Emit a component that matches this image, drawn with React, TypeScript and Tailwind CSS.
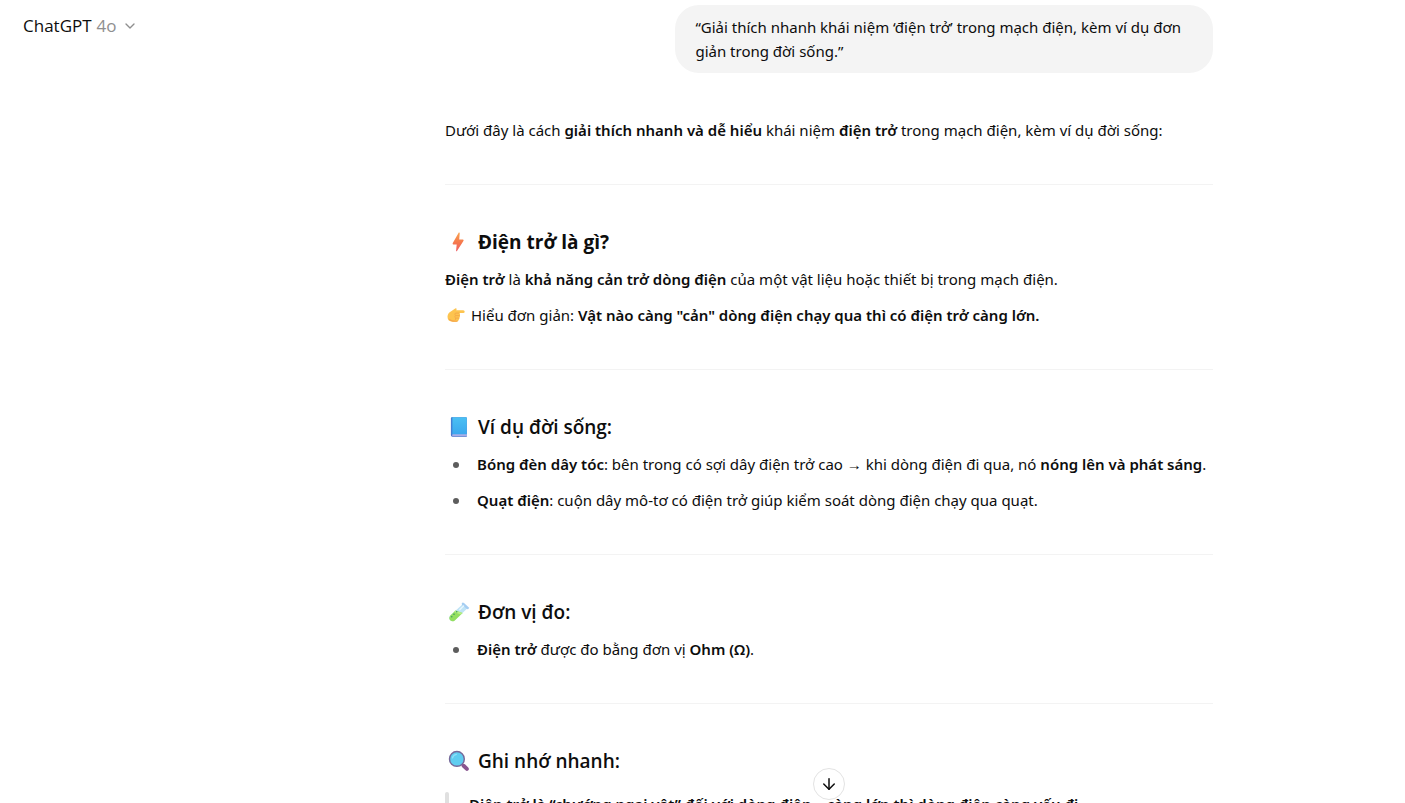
import React from 'react';
import { ArrowDown, ChevronDown } from 'lucide-react';

interface IconProps {
  className?: string;
}

// --- Icons ---

const BoltIcon: React.FC<IconProps> = ({ className }) => (
  <svg viewBox="0 0 22 22" className={className} aria-hidden="true">
    <defs>
      <linearGradient id="bolt" x1="0" y1="0" x2="0" y2="1">
        <stop offset="0" stopColor="#f9a24e" />
        <stop offset="0.55" stopColor="#f5774d" />
        <stop offset="1" stopColor="#ee5f68" />
      </linearGradient>
    </defs>
    <path
      d="M10.8 1.6 Q11.8 1.2 11.7 2.4 L11.2 8.4 H14.9 Q16.2 8.6 15.4 9.9 L9 19.9 Q7.9 21 8.1 19.5 L8.7 13.4 H5.2 Q4.2 13.1 4.8 12Z"
      fill="url(#bolt)"
    />
  </svg>
);

const PointIcon: React.FC<IconProps> = ({ className }) => (
  <svg viewBox="0 0 18 18" className={className} aria-hidden="true">
    <path
      d="M4.2 5.2 L8.2 2.5 Q9.7 1.9 9.6 3.4 L9.2 4.3 H16.3 Q17.7 4.5 17.7 5.7 Q17.6 7 16.3 7.1 H12.4 Q13.4 8 12.9 9.4 Q13.3 10.7 12.4 11.8 Q12.5 13 11.6 13.9 Q11.3 15.6 9.5 15.7 H5.6 Q0.6 15.5 0.5 10.7 Q0.6 7 4.2 5.2Z"
      fill="#fdc44f"
    />
    <path
      d="M12.4 7.1 H8.6 Q7.4 7.7 8.1 9.3 M12.9 9.6 H8.5 Q7.5 10.6 8.3 11.9 M12.3 12.1 H8.7 Q7.9 13 8.5 14"
      fill="none"
      stroke="#f0a045"
      strokeWidth="0.7"
    />
    <path d="M1.4 12.6 Q2.6 15.6 6 15.7 H9.5 Q10.8 15.6 11.4 14.5 Q7 15.6 1.4 12.6Z" fill="#f5a54c" />
  </svg>
);

const BookIcon: React.FC<IconProps> = ({ className }) => (
  <svg viewBox="0 0 22 22" className={className} aria-hidden="true">
    <defs>
      <linearGradient id="book" x1="0" y1="0" x2="0" y2="1">
        <stop offset="0" stopColor="#4bc0f3" />
        <stop offset="1" stopColor="#3ba8ee" />
      </linearGradient>
    </defs>
    <path d="M4 1.2 H18 Q18.8 1.2 18.8 2 V20.8 H4.4 Q2.9 20.6 2.9 19 V2.4 Q2.9 1.2 4 1.2Z" fill="#4a72cc" />
    <path d="M4.2 18.3 H18.8 V19.7 H4.2Z" fill="#d3c8f2" />
    <path d="M4.1 1.2 H18 Q18.8 1.2 18.8 2 V18.2 H4.1Z" fill="url(#book)" />
    <path d="M4 1.2 V18.4" stroke="#3d8fdd" strokeWidth="0.9" />
  </svg>
);

const TestTubeIcon: React.FC<IconProps> = ({ className }) => (
  <svg viewBox="0 0 22 22" className={className} aria-hidden="true">
    <path d="M14.6 3.2 L19.2 7.6 L6.9 19.3 Q4.6 21.3 2.2 19.3 Q0.2 17 2.2 14.6Z" fill="#bfe3f5" />
    <path d="M7.5 9.6 L14.6 11.9 L6.8 19.4 Q4.5 21.2 2.2 19.3 Q0.3 17.1 2.2 14.7Z" fill="#94df60" />
    <path d="M7.5 9.6 L14.6 11.9 L12.6 13.4 L6.2 11Z" fill="#b8ef85" />
    <path d="M13.7 2.4 Q14.7 0.8 16 2 L20.6 6.3 Q21.5 7.7 20 8.2 L18.8 8 L14 3.8Z" fill="#a5cdf2" />
    <path d="M15.6 5 L11.8 8.7" stroke="#e8f7ff" strokeWidth="1.3" strokeLinecap="round" />
    <circle cx="8.7" cy="10.7" r="0.8" fill="#3f9a68" />
    <circle cx="6" cy="13.2" r="0.8" fill="#3f9a68" />
    <circle cx="3.7" cy="15.8" r="0.8" fill="#3f9a68" />
  </svg>
);

const MagnifierIcon: React.FC<IconProps> = ({ className }) => (
  <svg viewBox="0 0 22 22" className={className} aria-hidden="true">
    <path d="M13.3 13.6 L16 16.2" stroke="#8d8294" strokeWidth="2.2" />
    <path d="M15.6 15.8 L18.9 18.9" stroke="#8a5690" strokeWidth="4" strokeLinecap="round" />
    <circle cx="8.9" cy="8.9" r="7.4" fill="#5fcdf0" stroke="#75699a" strokeWidth="1.4" />
    <path d="M4.4 8 Q5.3 4.8 8.4 4.3" fill="none" stroke="#8fe0f8" strokeWidth="1.2" strokeLinecap="round" />
  </svg>
);

// --- Building blocks ---

interface SectionHeadingProps {
  icon: React.FC<IconProps>;
  bold?: boolean;
  children: React.ReactNode;
}

const SectionHeading: React.FC<SectionHeadingProps> = ({ icon: Icon, bold, children }) => (
  <h3
    className={`mb-[7px] mt-[41px] flex items-center gap-2 pl-[3px] font-['Open_Sans',sans-serif] text-[19px] leading-8 ${bold ? 'font-bold' : 'font-semibold'}`}
  >
    <Icon className="size-[22px] shrink-0" />
    {children}
  </h3>
);

const Divider = () => <hr className="mt-10 border-t border-[#f3f3f3]" />;

const BulletList: React.FC<{ children: React.ReactNode }> = ({ children }) => (
  <ul className="flex flex-col gap-2 leading-7">{children}</ul>
);

const Bullet: React.FC<{ children: React.ReactNode }> = ({ children }) => (
  <li className="flex">
    <span className="flex h-7 w-8 shrink-0 items-center pl-2 pt-px">
      <span className="size-1.5 rounded-full bg-[#5d5d5d]" />
    </span>
    <p className="whitespace-nowrap">{children}</p>
  </li>
);

const Strong: React.FC<{ children: React.ReactNode }> = ({ children }) => (
  <strong className="font-semibold">{children}</strong>
);

const App: React.FC = () => {
  return (
    <div className="flex h-screen overflow-hidden bg-white font-['Noto_Sans','Open_Sans',sans-serif] text-[15px] text-[#0d0d0d]">
      <header className="w-[253px] shrink-0 px-[23px] pt-3">
        <button type="button" className="flex items-center font-['Open_Sans',sans-serif] text-[17px] leading-7">
          <span>ChatGPT</span>
          <span className="ml-[5px] text-[#8f8f8f]">4o</span>
          <ChevronDown className="ml-[5px] size-4 text-[#8f8f8f]" />
        </button>
      </header>

      <main className="relative min-w-0 flex-1">
        <div className="mx-auto max-w-3xl pt-[5px]">
          <div className="mb-[43px] ml-auto w-[70%] rounded-3xl bg-[#f4f4f4] px-5 py-2.5 leading-6">
            “Giải thích nhanh khái niệm ‘điện trở’ trong mạch điện, kèm ví dụ đơn giản trong đời sống.”
          </div>

          <article>
            <p className="leading-7">
              Dưới đây là cách <Strong>giải thích nhanh và dễ hiểu</Strong> khái niệm <Strong>điện trở</Strong> trong
              mạch điện, kèm ví dụ đời sống:
            </p>

            <Divider />

            <SectionHeading icon={BoltIcon} bold>Điện trở là gì?</SectionHeading>
            <p className="mb-2 leading-7">
              <Strong>Điện trở</Strong> là <Strong>khả năng cản trở dòng điện</Strong> của một vật liệu hoặc thiết bị
              trong mạch điện.
            </p>
            <p className="flex items-center leading-7">
              <PointIcon className="ml-0.5 mr-1.5 size-[18px] shrink-0" />
              <span>
                Hiểu đơn giản: <Strong>Vật nào càng "cản" dòng điện chạy qua thì có điện trở càng lớn.</Strong>
              </span>
            </p>

            <Divider />

            <SectionHeading icon={BookIcon}>Ví dụ đời sống:</SectionHeading>
            <BulletList>
              <Bullet>
                <Strong>Bóng đèn dây tóc</Strong>: bên trong có sợi dây điện trở cao → khi dòng điện đi qua, nó{' '}
                <Strong>nóng lên và phát sáng</Strong>.
              </Bullet>
              <Bullet>
                <Strong>Quạt điện</Strong>: cuộn dây mô-tơ có điện trở giúp kiểm soát dòng điện chạy qua quạt.
              </Bullet>
            </BulletList>

            <Divider />

            <SectionHeading icon={TestTubeIcon}>Đơn vị đo:</SectionHeading>
            <BulletList>
              <Bullet>
                <Strong>Điện trở</Strong> được đo bằng đơn vị <Strong>Ohm (Ω)</Strong>.
              </Bullet>
            </BulletList>

            <Divider />

            <SectionHeading icon={MagnifierIcon}>Ghi nhớ nhanh:</SectionHeading>
            <blockquote className="mt-[15px] flex gap-5 font-semibold leading-6">
              <span className="w-1 rounded-sm bg-[#e0e0e0]" />
              <p>Điện trở là “chướng ngại vật” đối với dòng điện – càng lớn thì dòng điện càng yếu đi.</p>
            </blockquote>
          </article>
        </div>

        <button
          type="button"
          aria-label="Scroll to bottom"
          className="absolute bottom-[3px] left-1/2 flex size-8 -translate-x-1/2 items-center justify-center rounded-full border border-[#e3e3e3] bg-white"
        >
          <ArrowDown className="size-[18px]" />
        </button>
      </main>
    </div>
  );
};

export default App;
